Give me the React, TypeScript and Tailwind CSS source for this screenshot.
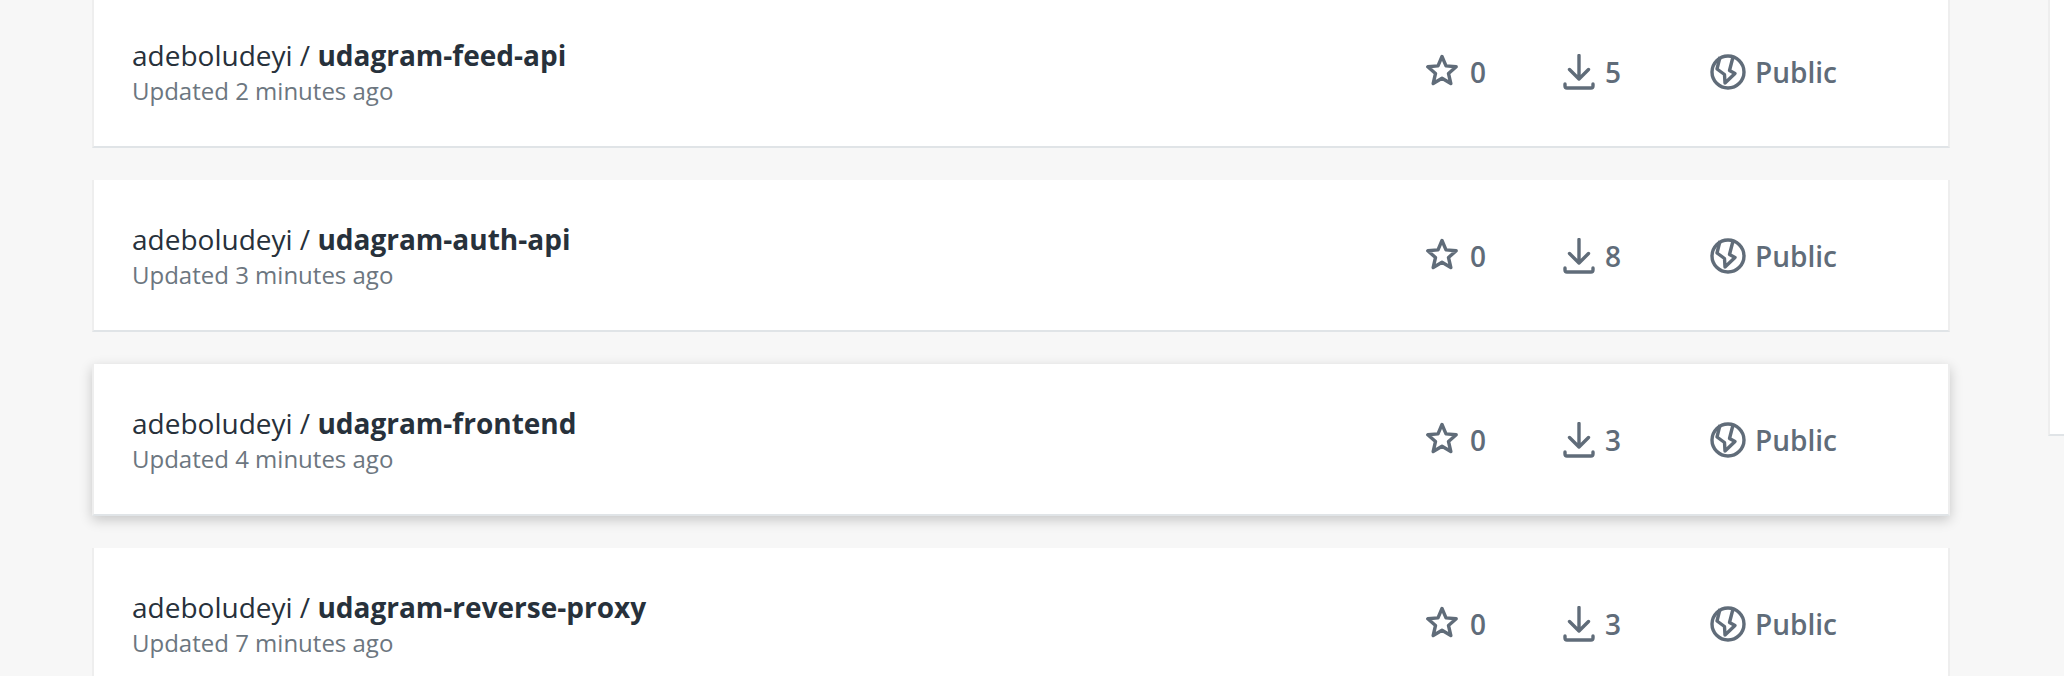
const repos = [
  { name: "udagram-feed-api", updated: "Updated 2 minutes ago", pulls: 5 },
  { name: "udagram-auth-api", updated: "Updated 3 minutes ago", pulls: 8 },
  { name: "udagram-frontend", updated: "Updated 4 minutes ago", pulls: 3, hover: true },
  { name: "udagram-reverse-proxy", updated: "Updated 7 minutes ago", pulls: 3 },
];

function StarIcon() {
  return (
    <svg className="-mt-[4px]" width="32" height="32" viewBox="0 0 32 32" fill="none" stroke="currentColor" strokeWidth="3.4" strokeLinejoin="round">
      <path d="M16 2.5l4 9.4 10.2.9-7.7 6.7 2.3 10-8.8-5.3-8.8 5.3 2.3-10-7.7-6.7 10.2-.9z" />
    </svg>
  );
}

function DownloadIcon() {
  return (
    <svg width="32" height="36" viewBox="0 0 32 36" fill="none" stroke="currentColor" strokeWidth="3.4" strokeLinecap="round" strokeLinejoin="round">
      <path d="M16 1.5v23.5M6.5 15.5l9.5 9.5 9.5-9.5" />
      <path d="M2 30v2a2 2 0 0 0 2 2h24a2 2 0 0 0 2-2v-2" />
    </svg>
  );
}

function PublicIcon() {
  return (
    <svg width="36" height="36" viewBox="0 0 36 36" fill="none" stroke="currentColor" strokeWidth="3.4" strokeLinejoin="round">
      <circle cx="18" cy="18" r="16" />
      <path d="M10 3L7 15l7.5 5.5.5 8.5 10-9.5-5.5-3L23 3" />
    </svg>
  );
}

function RepoCard({ name, updated, pulls, hover }: { name: string; updated: string; pulls: number; hover?: boolean }) {
  return (
    <div
      className={
        "flex h-[152px] shrink-0 items-center bg-white pl-[38px] border-l-2 border-r-2 border-b-2 border-l-[#eeeeee] border-r-[#eeeeee] border-b-[#e0e4e7] " +
        (hover ? "shadow-[0_4px_12px_rgba(0,0,0,0.2)]" : "")
      }
    >
      <div className="flex-1 pt-[2px]">
        <div className="text-[28px] leading-[36px] text-[#27313b]">
          adeboludeyi / <span className="font-bold">{name}</span>
        </div>
        <div className="mt-[2px] text-[24px] leading-[32px] text-[#6c7680]">{updated}</div>
      </div>
      <div className="flex items-center pt-[2px] text-[28px] font-semibold text-[#606c79]">
        <div className="flex w-[137px] items-center gap-[12px]">
          <StarIcon />
          <span>0</span>
        </div>
        <div className="flex w-[147px] items-center gap-[10px]">
          <DownloadIcon />
          <span>{pulls}</span>
        </div>
        <div className="flex w-[238px] items-center gap-[9px]">
          <PublicIcon />
          <span>Public</span>
        </div>
      </div>
    </div>
  );
}

export default function App() {
  return (
    <div className="flex h-[676px] w-[2064px] overflow-hidden bg-[#f7f7f7] font-['Open_Sans',sans-serif]">
      <div className="ml-[92px] -mt-[4px] flex w-[1858px] shrink-0 flex-col gap-[32px]">
        {repos.map((r) => (
          <RepoCard key={r.name} {...r} />
        ))}
      </div>
      <div className="ml-[98px] h-[436px] flex-1 border-l-2 border-b-2 border-l-[#eeeeee] border-b-[#e0e4e7] bg-white" />
    </div>
  );
}
